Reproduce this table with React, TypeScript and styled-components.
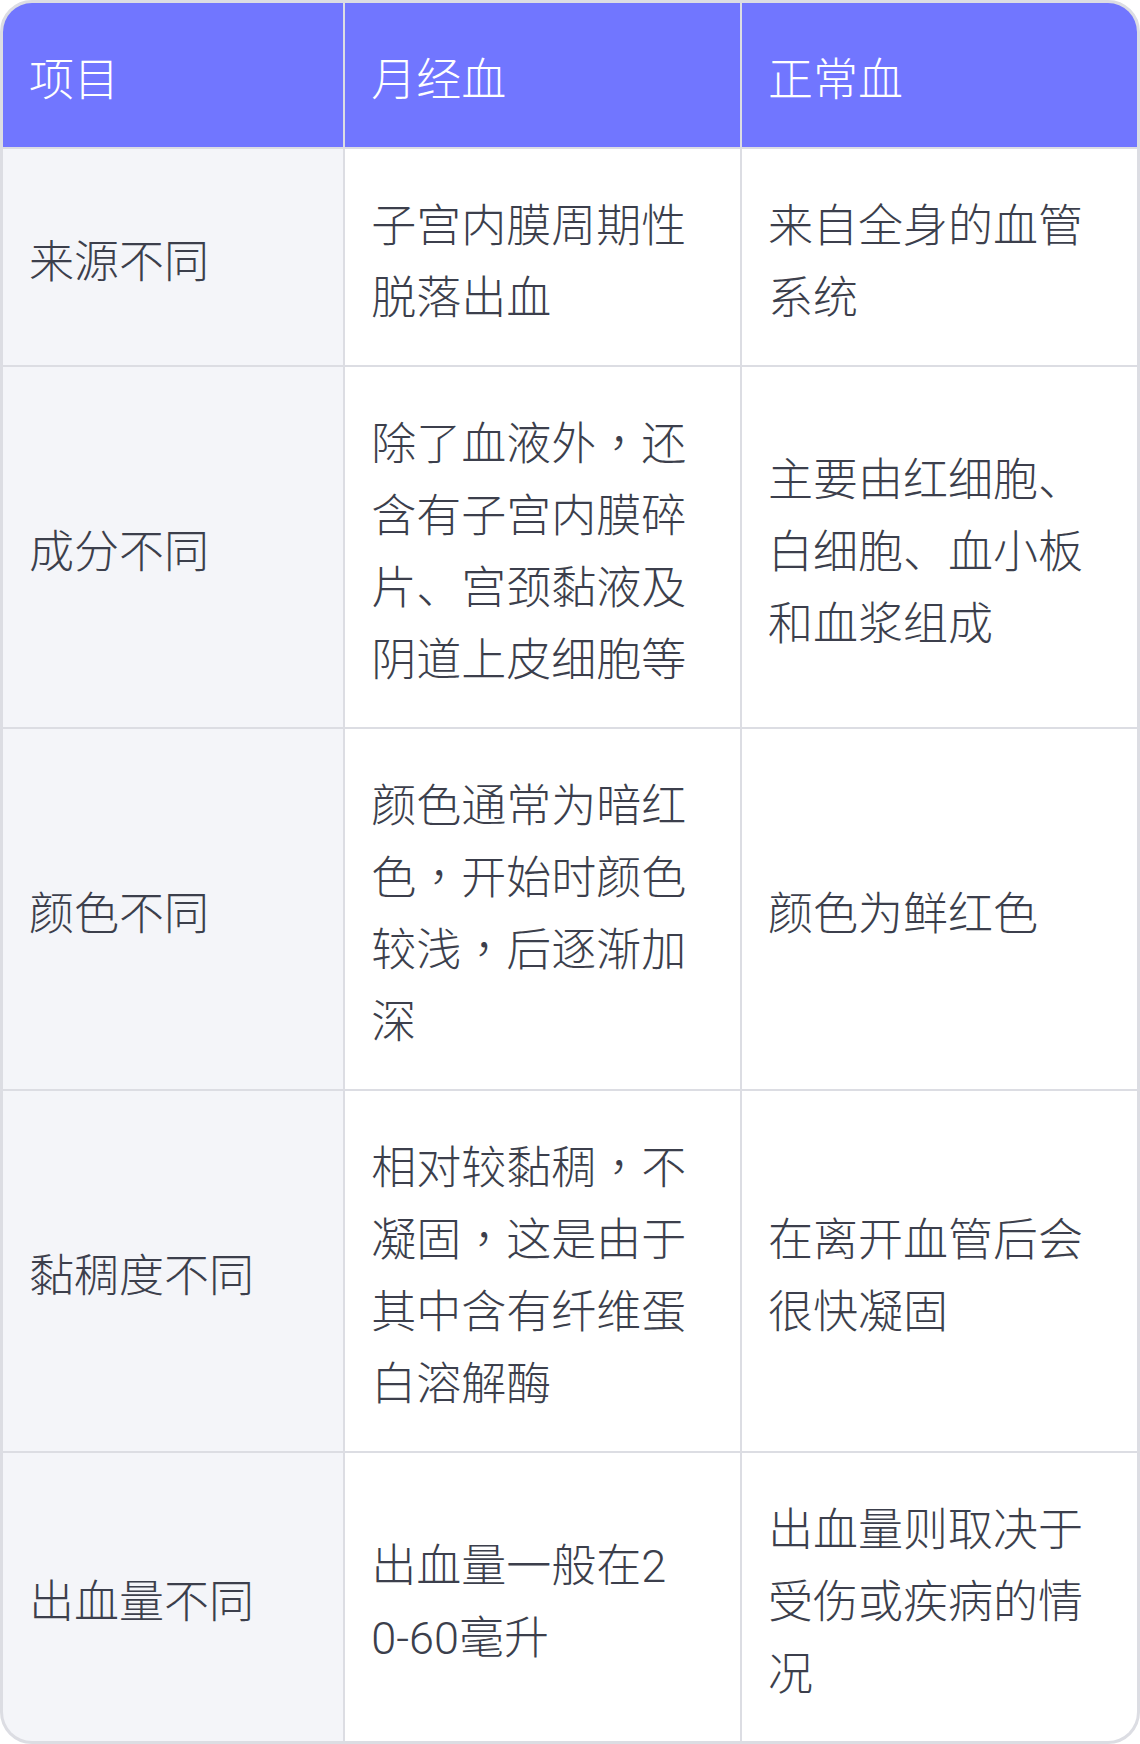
import React from "react";
import styled, { createGlobalStyle } from "styled-components";

const rows: [string, string, string][] = [
  ["来源不同", "子宫内膜周期性脱落出血", "来自全身的血管系统"],
  [
    "成分不同",
    "除了血液外，还含有子宫内膜碎片、宫颈黏液及阴道上皮细胞等",
    "主要由红细胞、白细胞、血小板和血浆组成",
  ],
  ["颜色不同", "颜色通常为暗红色，开始时颜色较浅，后逐渐加深", "颜色为鲜红色"],
  [
    "黏稠度不同",
    "相对较黏稠，不凝固，这是由于其中含有纤维蛋白溶解酶",
    "在离开血管后会很快凝固",
  ],
  ["出血量不同", "出血量一般在20-60毫升", "出血量则取决于受伤或疾病的情况"],
];

// full-width commas sit centred in the reference
const withCommas = (text: string) =>
  text.split("，").map((part, i) => (
    <React.Fragment key={i}>
      {i > 0 && <Comma>，</Comma>}
      {part}
    </React.Fragment>
  ));

const App = () => {
  return (
    <>
      <GlobalStyle />
      <Table>
        <Cell $head>
          <Text>项目</Text>
        </Cell>
        <Cell $head>
          <Text>月经血</Text>
        </Cell>
        <Cell $head>
          <Text>正常血</Text>
        </Cell>
        {rows.map((r) => (
          <React.Fragment key={r[0]}>
            <Cell $label>
              <Text>{r[0]}</Text>
            </Cell>
            <Cell>
              <Text>{withCommas(r[1])}</Text>
            </Cell>
            <Cell>
              <Text>{withCommas(r[2])}</Text>
            </Cell>
          </React.Fragment>
        ))}
      </Table>
    </>
  );
};

export default App;

const GlobalStyle = createGlobalStyle`
  html, body {
    margin: 0;
    padding: 0;
    background: #ffffff;
  }
  body {
    font-family: Roboto, "Noto Sans CJK SC", sans-serif;
  }
`;

const Table = styled.div`
  width: 1140px;
  box-sizing: border-box;
  display: grid;
  grid-template-columns: 30% 1fr 1fr;
  gap: 2px;
  background: #dcdde3;
  border: 3px solid #dcdde3;
  border-radius: 32px;
  overflow: hidden;
`;

const Cell = styled.div<{ $head?: boolean; $label?: boolean }>`
  display: flex;
  align-items: center;
  padding: 42px 51px 30px 26px;
  color: ${(p) => (p.$head ? "#ffffff" : "#3c3f4c")};
  background: ${(p) => (p.$head ? "#7176ff" : p.$label ? "#f4f5f9" : "#ffffff")};
`;

const Text = styled.div`
  flex: 1;
  min-width: 0;
  font-size: 45px;
  line-height: 72px;
  font-weight: 300;
  word-break: break-all;
`;

const Comma = styled.span`
  font-family: "Noto Sans CJK TC", sans-serif;
  line-height: 0;
`;
